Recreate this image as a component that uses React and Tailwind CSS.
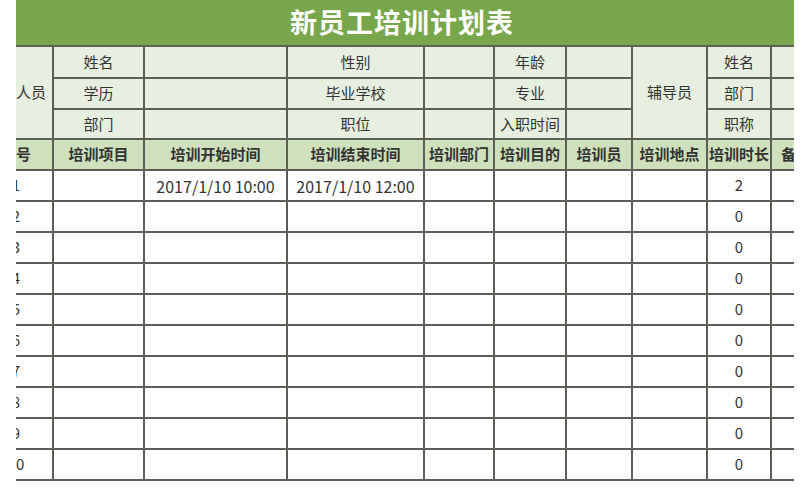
import React from 'react';

const cols = 'grid-cols-[72px_89px_141px_135px_68px_70px_64px_73px_62px_48px]';
const rows = 'grid-rows-[45px_30px_29px_28px_29px_repeat(10,29px)]';

const headers = ['序号', '培训项目', '培训开始时间', '培训结束时间', '培训部门', '培训目的', '培训员', '培训地点', '培训时长', '备注'];

const data = Array.from({ length: 10 }, (_, i) => ({
  no: i + 1,
  start: i === 0 ? '2017/1/10 10:00' : '',
  end: i === 0 ? '2017/1/10 12:00' : '',
  hours: i === 0 ? 2 : 0,
}));

const Info = ({ children, className = '' }) => (
  <div className={`bg-[#e7efe0] flex items-center justify-center whitespace-nowrap ${className}`}>{children}</div>
);

export default function App() {
  return (
    <div className="w-[811px] h-[500px] bg-white overflow-hidden" style={{ fontFamily: '"Noto Sans CJK SC", "Noto Sans", sans-serif' }}>
      <div className="ml-[16px] w-[778px] overflow-hidden">
        <div className={`ml-[-36px] w-[826px] grid ${cols} ${rows} gap-[2px] pb-[2px] bg-[#5c5e58] text-[15px] text-[#333]`}>
          {/* Title */}
          <div className="col-span-10 bg-[#78a74b] flex items-center justify-center text-white font-bold text-[27px] tracking-[1px] pl-[4px]">
            新员工培训计划表
          </div>

          {/* Info block */}
          <Info className="row-span-3">培训人员</Info>
          <Info>姓名</Info>
          <Info />
          <Info>性别</Info>
          <Info />
          <Info>年龄</Info>
          <Info />
          <Info className="row-span-3">辅导员</Info>
          <Info>姓名</Info>
          <Info />

          <Info>学历</Info>
          <Info />
          <Info>毕业学校</Info>
          <Info />
          <Info>专业</Info>
          <Info />
          <Info>部门</Info>
          <Info />

          <Info>部门</Info>
          <Info />
          <Info>职位</Info>
          <Info />
          <Info>入职时间</Info>
          <Info />
          <Info>职称</Info>
          <Info />

          {/* Column headers */}
          {headers.map((h) => (
            <div key={h} className="bg-[#cfe0bd] flex items-center justify-center font-bold whitespace-nowrap">
              {h}
            </div>
          ))}

          {/* Rows */}
          {data.map((r) => (
            <React.Fragment key={r.no}>
              <div className="bg-white flex items-center justify-center">{r.no}</div>
              <div className="bg-white" />
              <div className="bg-white flex items-center justify-center whitespace-nowrap text-[16px]">{r.start}</div>
              <div className="bg-white flex items-center justify-center whitespace-nowrap text-[16px]">{r.end}</div>
              <div className="bg-white" />
              <div className="bg-white" />
              <div className="bg-white" />
              <div className="bg-white" />
              <div className="bg-white flex items-center justify-center">{r.hours}</div>
              <div className="bg-white" />
            </React.Fragment>
          ))}
        </div>
      </div>
    </div>
  );
}
